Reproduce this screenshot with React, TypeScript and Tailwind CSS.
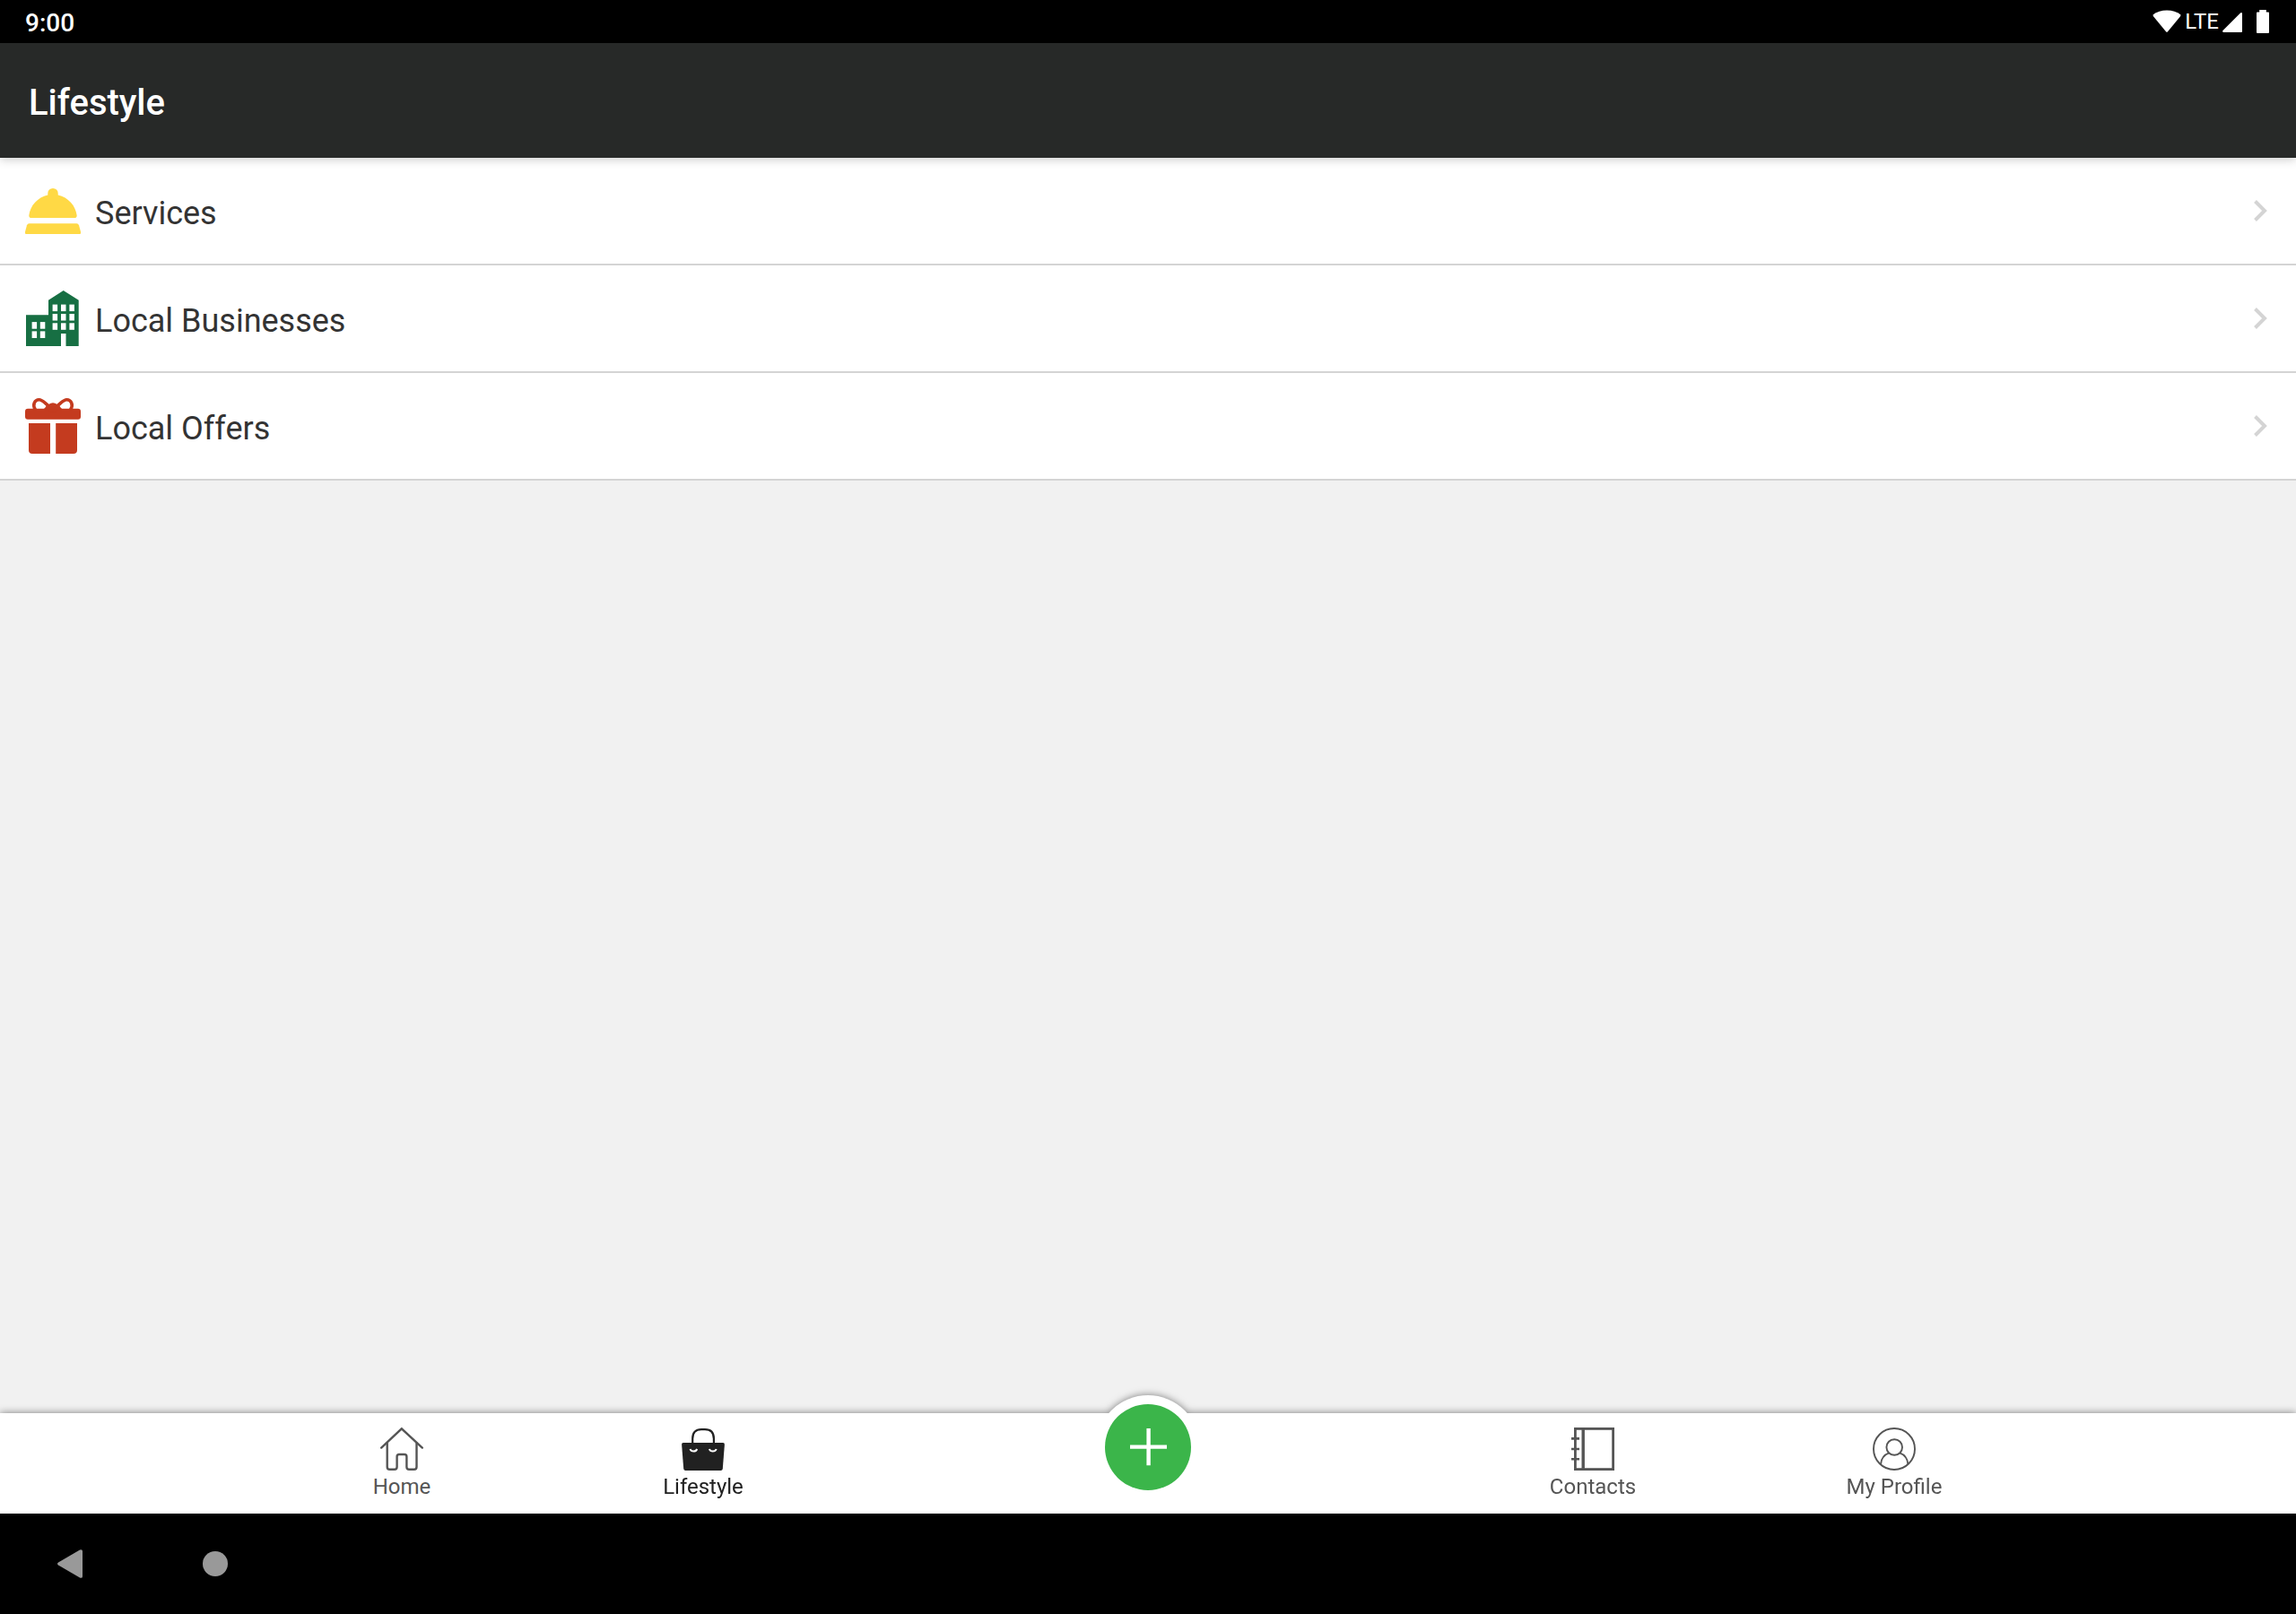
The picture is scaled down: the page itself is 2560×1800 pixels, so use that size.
import React, { useState } from 'react'

type IconProps = { className?: string }

const BellIcon = ({ className }: IconProps) => (
  <svg viewBox="0 0 62 62" fill="currentColor" className={className} aria-hidden="true">
    <path d="M25.3 13.4V11.6a5.7 5.7 0 0 1 11.4 0V13.4C48 16 56.3 25 57.7 36.2Q57.8 39 55 39H7Q4.2 39 4.3 36.2C5.7 25 14 16 25.3 13.4Z" />
    <path d="M4.6 45.3H57.4Q59.4 45.3 60 47.2L62 54.5V56Q62 57 61 57H1Q0 57 0 56V54.5L2 47.2Q2.6 45.3 4.6 45.3Z" />
  </svg>
)

const BuildingIcon = ({ className }: IconProps) => (
  <svg viewBox="0 0 62 62" className={className} aria-hidden="true">
    <path fill="currentColor" d="M1 27.3H26V10.7L42.7 0L59.7 10.7V62H1Z" />
    <g fill="#fff">
      {[15.6, 26, 36.3].map((y) =>
        [30.6, 40, 49.4].map((x) => <rect key={`${x}-${y}`} x={x} y={y} width="5.5" height="7.5" />)
      )}
      {[35.1, 45.4].map((y) =>
        [7.6, 16.8].map((x) => <rect key={`${x}-${y}`} x={x} y={y} width="5.5" height="7.6" />)
      )}
      <rect x="40" y="48" width="5.5" height="14" />
    </g>
  </svg>
)

const GiftIcon = ({ className }: IconProps) => (
  <svg viewBox="0 0 62 62" fill="currentColor" className={className} aria-hidden="true">
    <path d="M28 28V62H8Q4 62 4 58V28ZM34.2 28H58V58Q58 62 54 62H34.2Z" />
    <rect y="11.7" width="62" height="12" rx="3" />
    <ellipse cx="31" cy="10.6" rx="6.2" ry="5.3" />
    <path
      d="M11.5 13C7.5 7.5 11 1.8 15.5 1.8C20 1.8 22.5 6.500 28 10M50.5 13C54.5 7.5 51 1.8 46.5 1.8C42 1.8 39.5 6.5 34 10"
      fill="none"
      stroke="currentColor"
      strokeWidth="3.6"
    />
    <path d="M20.5 12.5Q23 10.5 24.5 7L31 12.5ZM41.5 12.5Q39 10.5 37.5 7L31 12.5Z" />
  </svg>
)

const HomeIcon = ({ className }: IconProps) => (
  <svg viewBox="0 0 48 48" fill="none" stroke="currentColor" strokeWidth="2.4" strokeLinecap="round" className={className} aria-hidden="true">
    <path d="M1.2 22.6L23.8 1.3L46.8 22.6" />
    <path d="M7.7 17.5V44Q7.7 46.8 10.5 46.8H15.8Q18.6 46.8 18.6 44V32.5Q18.6 30 21.2 30H26.8Q29.4 30 29.4 32.5V44Q29.4 46.8 32.2 46.8H37.7Q40.5 46.8 40.5 44V17.5" />
  </svg>
)

const BagIcon = ({ className }: IconProps) => (
  <svg viewBox="0 0 48 48" fill="none" className={className} aria-hidden="true">
    <path d="M12.2 18V12.5Q12.2 2.2 22 2.2H26Q35.9 2.2 35.9 12.5V18" stroke="currentColor" strokeWidth="2.2" />
    <path d="M1.8 17H46.2Q48 17 47.9 19L45.8 46Q45.6 48 43.6 48H4.4Q2.4 48 2.2 46L0.1 19Q0 17 1.8 17Z" fill="currentColor" />
    <path d="M9.5 24Q10.5 26.6 13.3 26.6T17.2 24M30.9 24Q31.9 26.6 34.8 26.6T38.7 24" stroke="#fff" strokeWidth="2" />
  </svg>
)

const ContactsIcon = ({ className }: IconProps) => (
  <svg viewBox="0 0 48 48" fill="none" stroke="currentColor" strokeWidth="2.8" className={className} aria-hidden="true">
    <rect x="4.4" y="1.4" width="42.2" height="45.2" />
    <path d="M13.2 1V47" strokeWidth="3.4" />
    <path d="M0 12.4H9M0 24H9M0 35.3H9" strokeWidth="2.6" />
  </svg>
)

const ProfileIcon = ({ className }: IconProps) => (
  <svg viewBox="0 0 48 48" fill="none" stroke="currentColor" strokeWidth="1.9" className={className} aria-hidden="true">
    <circle cx="24" cy="24" r="23" />
    <circle cx="24.2" cy="22" r="8.8" />
    <path d="M9 41C9.5 35 12.5 30.5 18.3 28.4M39.4 41C38.9 35 35.9 30.5 30.1 28.4" />
  </svg>
)

const services = [
  { label: 'Services', icon: BellIcon, color: 'text-[#ffd945]' },
  { label: 'Local Businesses', icon: BuildingIcon, color: 'text-[#176f43]' },
  { label: 'Local Offers', icon: GiftIcon, color: 'text-[#c43b1f]' },
]

const leftTabs = [
  { label: 'Home', icon: HomeIcon },
  { label: 'Lifestyle', icon: BagIcon },
]

const rightTabs = [
  { label: 'Contacts', icon: ContactsIcon },
  { label: 'My Profile', icon: ProfileIcon },
]

interface TabProps {
  label: string
  icon: React.FC<IconProps>
  active: boolean
  onSelect: (label: string) => void
}

const Tab: React.FC<TabProps> = ({ label, icon: Icon, active, onSelect }) => (
  <button
    type="button"
    onClick={() => onSelect(label)}
    aria-current={active ? 'page' : undefined}
    className={`flex max-w-[336px] flex-1 flex-col items-center gap-1 pt-4 ${active ? 'text-[#212121]' : 'text-[#555555]'}`}
  >
    <Icon className="h-12 w-12" />
    <span className="text-2xl leading-7">{label}</span>
  </button>
)

const StatusBar = () => (
  <div className="flex h-12 items-center justify-between bg-black pr-[30px] pl-7 text-white">
    <span className="pt-1 text-[28px] leading-8 font-medium">9:00</span>
    <div className="flex items-center">
      <svg viewBox="0 0 32 26" fill="currentColor" className="h-[26px] w-8" aria-hidden="true">
        <path d="M0.5 5.5Q7 0.5 16 0.5T31.5 5.5Q31.5 6.5 30.8 7.4L17 24.2Q16 25.2 15 24.2L1.2 7.4Q0.5 6.5 0.5 5.5Z" />
      </svg>
      <span className="px-1 text-2xl leading-8">LTE</span>
      <svg viewBox="0 0 22 22" fill="currentColor" className="mt-0.5 h-[22px] w-[22px]" aria-hidden="true">
        <path d="M22 1V21Q22 22 21 22H1Q-0.5 21.5 0.5 20L20 0.5Q21.5 -0.5 22 1Z" />
      </svg>
      <svg viewBox="0 0 14 26" fill="currentColor" className="ml-4 h-[26px] w-[14px]" aria-hidden="true">
        <path d="M3.2 0H10.8V2.5H13Q14 2.5 14 3.5V25Q14 26 13 26H1Q0 26 0 25V3.5Q0 2.5 1 2.5H3.2Z" />
      </svg>
    </div>
  </div>
)

const App: React.FC = () => {
  const [activeTab, setActiveTab] = useState('Lifestyle')

  return (
    <div className="flex min-h-screen flex-col bg-[#f1f1f1] font-[Roboto,sans-serif]">
      <StatusBar />

      {/* Header */}
      <header className="z-10 flex h-32 items-center bg-[#272928] px-8 pt-1.5 shadow-[0_2px_10px_rgba(0,0,0,0.2)]">
        <h1 className="text-[40px] leading-12 font-medium text-white">{activeTab}</h1>
      </header>

      {/* Menu rows */}
      <main className="flex-1">
        <ul>
          {services.map(({ label, icon: Icon, color }) => (
            <li key={label} className="border-b-2 border-[#d4d4d4] bg-white">
              <a href="#" className="flex items-center gap-4 py-7 pr-8 pl-7">
                <Icon className={`h-[62px] w-[62px] shrink-0 ${color}`} />
                <span className="flex-1 pt-1.5 text-4xl text-[#333333]">{label}</span>
                <svg viewBox="0 0 16 26" fill="none" stroke="#d4d4d4" strokeWidth="4" className="h-[26px] w-4" aria-hidden="true">
                  <path d="M2.5 2.5L13 13L2.5 23.5" />
                </svg>
              </a>
            </li>
          ))}
        </ul>
      </main>

      {/* Tab bar */}
      <nav className="drop-shadow-[0_0_4px_rgba(0,0,0,0.5)]">
        <div className="flex h-28 justify-center bg-white">
          {leftTabs.map((tab) => (
            <Tab key={tab.label} {...tab} active={activeTab === tab.label} onSelect={setActiveTab} />
          ))}
          <div className="-mt-5 flex max-w-[656px] flex-2 justify-center">
            <div className="h-[116px] w-[116px] rounded-full bg-white p-2.5">
              <button
                type="button"
                aria-label="Add"
                className="flex h-24 w-24 items-center justify-center rounded-full bg-[#3bb54a] text-white"
              >
                <svg viewBox="0 0 42 42" stroke="currentColor" strokeWidth="4.4" className="h-[42px] w-[42px]" aria-hidden="true">
                  <path d="M21.6 0V41.2M1 20.6H42.2" />
                </svg>
              </button>
            </div>
          </div>
          {rightTabs.map((tab) => (
            <Tab key={tab.label} {...tab} active={activeTab === tab.label} onSelect={setActiveTab} />
          ))}
        </div>
      </nav>

      {/* System navigation */}
      <div className="z-10 flex h-28 items-center bg-black px-12">
        <button type="button" aria-label="Back" className="flex w-15 justify-center text-[#999999]">
          <svg viewBox="0 0 28 32" fill="currentColor" className="h-8 w-7" aria-hidden="true">
            <path d="M1 14.5L25 0.4Q28 -0.5 28 2V30Q28 32.5 25 31.6L1 17.5Q-1 16 1 14.5Z" />
          </svg>
        </button>
        <button type="button" aria-label="Home screen" className="ml-25 flex w-16 justify-center">
          <span className="h-7 w-7 rounded-full bg-[#999999]" />
        </button>
      </div>
    </div>
  )
}

export default App
